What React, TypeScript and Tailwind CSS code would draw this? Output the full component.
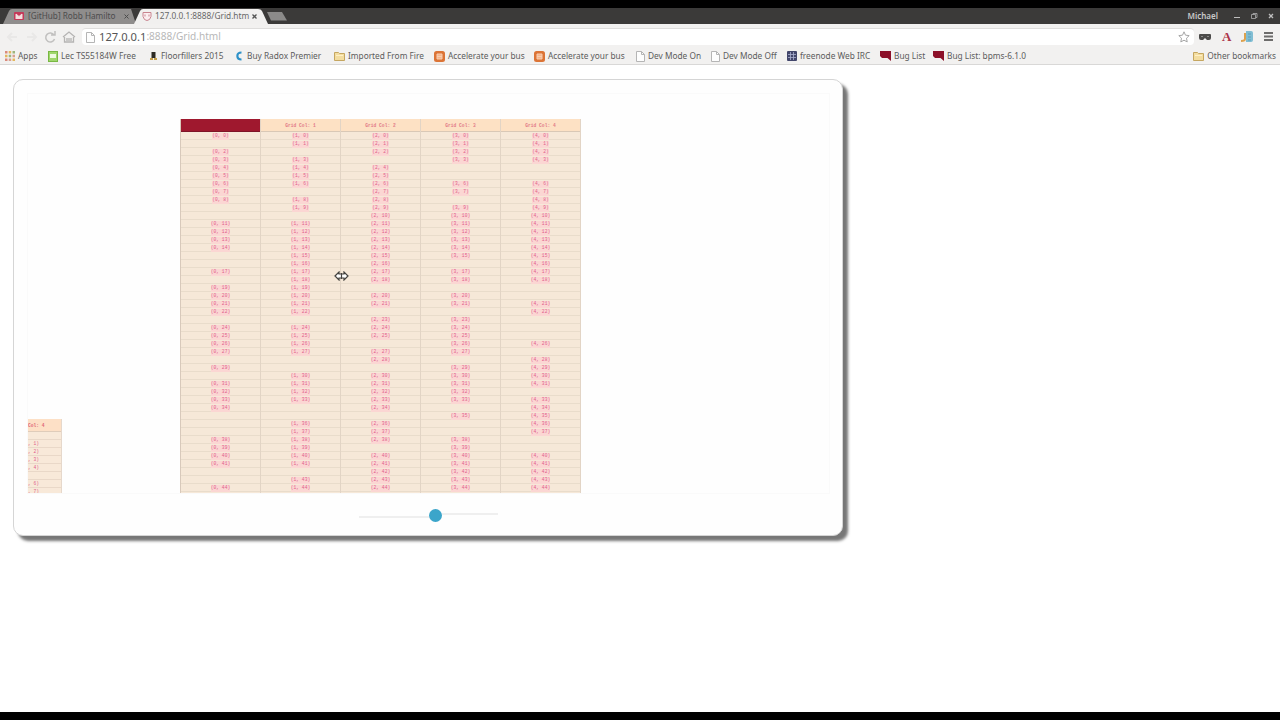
import type { ReactNode } from "react";

const ROW_COUNT = 45;

// rows holding a value, per column, as [first, last] ranges
const filledRows: [number, number][][] = [
  [[0, 0], [2, 8], [11, 14], [17, 17], [19, 22], [24, 27], [29, 29], [31, 34], [38, 41], [44, 44]],
  [[0, 1], [3, 6], [8, 9], [11, 22], [24, 27], [30, 33], [36, 41], [43, 44]],
  [[0, 2], [4, 18], [20, 21], [23, 25], [27, 28], [30, 34], [36, 38], [40, 44]],
  [[0, 3], [6, 7], [9, 15], [17, 18], [20, 21], [23, 27], [29, 33], [35, 35], [38, 44]],
  [[0, 3], [6, 18], [21, 22], [26, 26], [28, 31], [33, 37], [40, 44]],
];

const isFilled = (col: number, row: number) =>
  filledRows[col].some(([from, to]) => row >= from && row <= to);

function PageIcon() {
  return (
    <svg className="h-[11px] w-[9px] shrink-0" viewBox="0 0 9 11" fill="#fdfdfd" stroke="#b5b5b5">
      <path d="M.5.5h5l3 3v7h-8z" />
      <path d="M5.5.5v3h3" fill="none" />
    </svg>
  );
}

function FolderIcon() {
  return (
    <svg className="h-[10px] w-[11px] shrink-0" viewBox="0 0 11 10" fill="#f3dda0" stroke="#c5a660">
      <path d="M.5 1.5h4l1 1h5v7H.5z" />
      <path d="M2 4.5h7" stroke="#fff0c5" />
    </svg>
  );
}

function OrangeIcon() {
  return (
    <svg className="h-[11px] w-[11px] shrink-0" viewBox="0 0 11 11">
      <rect width="11" height="11" rx="2.5" fill="#dc7436" />
      <path d="M3 3h5v5H3zM3 5.500h5" fill="#f5b58a" stroke="#f8cdb0" />
    </svg>
  );
}

function BugIcon() {
  return (
    <svg className="h-[11px] w-[11px] shrink-0" viewBox="0 0 11 11">
      <path d="M0 0h11v10L7.500 7H2L0 5z" fill="#8c1029" />
    </svg>
  );
}

function MailIcon() {
  return (
    <svg className="h-[8px] w-[10px] shrink-0" viewBox="0 0 10 8">
      <rect width="10" height="8" rx="1" fill="#c4395a" />
      <path d="M2 7V2l3 2.500L8 2v5" fill="#f3dede" stroke="#f3dede" />
    </svg>
  );
}

function ShieldIcon() {
  return (
    <svg className="h-[10px] w-[10px] shrink-0" viewBox="0 0 10 10" fill="#fbeef0" stroke="#c9848f">
      <path d="M1 1.500h8v4L7.500 8.500 5 9.500 2.500 8.500 1 5.500z" />
      <path d="M3 3.500v2M7 3.500v2" />
    </svg>
  );
}

interface Bookmark {
  label: string;
  icon: ReactNode;
  width: string;
}

const bookmarks: Bookmark[] = [
  {
    label: "Apps",
    width: "w-[43px]",
    icon: (
      <svg className="h-[10px] w-[10px] shrink-0" viewBox="0 0 10 10">
        <path d="M0 0h2.500v2.500H0zM0 7.500h2.500V10H0z" fill="#d98a7b" />
        <path d="M3.700 0h2.500v2.500H3.700zM0 3.700h2.500v2.500H0zM7.500 7.500H10V10H7.500z" fill="#e4b75c" />
        <path d="M7.500 0H10v2.500H7.500zM3.700 3.700h2.500v2.500H3.700z" fill="#9cb57d" />
        <path d="M7.500 3.700H10v2.500H7.500zM3.700 7.500h2.500V10H3.700z" fill="#d9a08d" />
      </svg>
    ),
  },
  {
    label: "Lec TS55184W Free",
    width: "w-[101px]",
    icon: (
      <svg className="h-[11px] w-[10px] shrink-0" viewBox="0 0 10 11">
        <rect x=".5" y=".5" width="9" height="10" fill="#9fd66c" stroke="#79b843" />
        <path d="M2 3h6v4H2z" fill="#eefae2" />
      </svg>
    ),
  },
  {
    label: "Floorfillers 2015",
    width: "w-[86px]",
    icon: (
      <svg className="h-[10px] w-[9px] shrink-0" viewBox="0 0 9 10">
        <path d="M2.500 1h4v6h-4z" fill="#2c2a24" />
        <path d="M1 7h3v2H1zM5 7h3v2H5z" fill="#c5a04b" />
      </svg>
    ),
  },
  {
    label: "Buy Radox Premier",
    width: "w-[99px]",
    icon: (
      <svg className="h-[10px] w-[9px] shrink-0" viewBox="0 0 9 10" fill="none">
        <path d="M6.500 1.500C1 1.500 1 8.500 6.500 8.500" stroke="#2d91c8" strokeWidth="2.200" />
      </svg>
    ),
  },
  { label: "Imported From Fire", width: "w-[100px]", icon: <FolderIcon /> },
  { label: "Accelerate your bus", width: "w-[100px]", icon: <OrangeIcon /> },
  { label: "Accelerate your bus", width: "w-[102px]", icon: <OrangeIcon /> },
  { label: "Dev Mode On", width: "w-[75px]", icon: <PageIcon /> },
  { label: "Dev Mode Off", width: "w-[76px]", icon: <PageIcon /> },
  {
    label: "freenode Web IRC",
    width: "w-[93px]",
    icon: (
      <svg className="h-[10px] w-[10px] shrink-0" viewBox="0 0 10 10">
        <rect width="10" height="10" rx="1" fill="#42466b" />
        <path d="M3.500 1v8M6.500 1v8M1 3.500h8M1 6.500h8" stroke="#aab0cf" strokeWidth=".8" />
      </svg>
    ),
  },
  { label: "Bug List", width: "w-[53px]", icon: <BugIcon /> },
  { label: "Bug List: bpms-6.1.0", width: "w-[96px]", icon: <BugIcon /> },
];

function TabStrip() {
  return (
    <div className="relative flex h-4 items-center bg-[#3b3a39]">
      <svg className="absolute inset-0 h-4 w-[300px]" viewBox="0 0 300 16">
        <path d="M3 16 9 3Q10 1 12 1H131L136 16z" fill="#8f8d8c" />
        <path d="M134 16 140 3Q141 1 143 1H258Q261 1 262 3L268 16z" fill="#f1f0ef" />
        <path d="M267 4H282L287 12.500H271z" fill="#8b8a89" />
      </svg>
      <div className="relative flex h-4 w-[142px] items-center pl-[14px] text-[8.200px] text-[#4c4c4c]">
        <MailIcon />
        <span className="ml-1 w-[94px] whitespace-nowrap">[GitHub] Robb Hamilto</span>
        <svg className="ml-[2px] h-[5px] w-[5px]" viewBox="0 0 5 5" stroke="#4c4c4c">
          <path d="m.5.5 4 4m0-4-4 4" />
        </svg>
      </div>
      <div className="relative flex h-4 items-center text-[8.300px] text-[#686868]">
        <ShieldIcon />
        <span className="ml-[3px] w-[94px] whitespace-nowrap">127.0.0.1:8888/Grid.htm</span>
        <svg className="ml-[3px] h-[5px] w-[5px]" viewBox="0 0 5 5" stroke="#555" strokeWidth="1.300">
          <path d="m.5.5 4 4m0-4-4 4" />
        </svg>
      </div>
      <div className="ml-auto flex items-center pr-[5px] text-[#c9c9c9]">
        <span className="mr-[15px] text-[8px] font-semibold">Michael</span>
        <svg className="h-2 w-[42px]" viewBox="0 0 42 8" fill="none" stroke="#bdbdbd">
          <path d="M1 5.500h6" />
          <path d="M18.500 2.500h4v4h-4zM20 2.500v-1h4v4h-1" strokeWidth=".7" />
          <path d="M36 2l4 4M40 2l-4 4" strokeWidth="1.300" />
        </svg>
      </div>
    </div>
  );
}

function Toolbar() {
  return (
    <div className="flex h-6 items-center bg-[#f2f1f0] pt-px">
      <svg className="h-4 w-[82px]" viewBox="0 0 82 16" fill="none">
        <path d="M17 8H8m4-4L8 8l4 4M27 8h9m-4-4 4 4-4 4" stroke="#e9e8e7" strokeWidth="2" />
        <path d="M54 6a4.500 4.500 0 1 0 .5 4M55 2v4h-4" stroke="#c1c0bf" strokeWidth="1.500" />
        <path d="m63 8 6-5 6 5M64.500 8v5h9V8" stroke="#b5b4b3" strokeWidth="1.300" />
        <path d="M66 9h6v3h-6z" fill="#c9c8c7" />
      </svg>
      <div className="flex h-[17px] w-[1112px] items-center rounded-sm border-t border-[#dedddc] bg-white pl-1">
        <PageIcon />
        <span className="ml-[4px] text-[11.200px] text-[#555]">127.0.0.1</span>
        <span className="text-[10.100px] text-[#b8b8b8]">:8888/Grid.html</span>
        <svg className="mr-[4px] ml-auto h-3 w-3" viewBox="0 0 12 12" fill="#fff" stroke="#a6a6a6">
          <path d="m6 .8 1.500 3.400 3.700.4-2.700 2.600.7 3.700L6 9.200l-3.200 1.700.7-3.700L.8 4.600l3.700-.4z" />
        </svg>
      </div>
      <div className="flex flex-1 items-center pl-[5px]">
        <svg className="h-[8px] w-[12px]" viewBox="0 0 12 8">
          <path d="M0 2Q0 1 1 1h10q1 0 1 1v3q0 2-2 2H8L6 5 4 7H2Q0 7 0 5z" fill="#4c4b4a" />
          <path d="M2 3.500h2M8 3.500h2" stroke="#8c8b8a" />
        </svg>
        <span className="ml-[11px] font-['Liberation_Serif',serif] text-[13px] leading-4 font-bold text-[#ac3448]">A</span>
        <svg className="ml-[9px] h-3 w-[13px]" viewBox="0 0 13 12">
          <path d="M6 0h5q2 0 2 2v7q0 2-2 2H6z" fill="#80bdd3" />
          <path d="M5 2v6q0 2-4 2" stroke="#dda24e" strokeWidth="2" fill="none" />
          <path d="M8 3h3M8 6h3M8 9h3" stroke="#5c9fba" />
        </svg>
        <svg className="ml-[11px] h-[11px] w-[9px]" viewBox="0 0 9 11" stroke="#6d6c6b" strokeWidth="2">
          <path d="M0 2h9M0 5.500h9M0 9h9" />
        </svg>
      </div>
    </div>
  );
}

function BookmarksBar() {
  return (
    <div className="flex h-[17px] items-center border-b border-[#d9d8d7] bg-[#f2f1f0] pl-[5px] text-[8.300px] text-[#5c5c5c]">
      {bookmarks.map((b, i) => (
        <div key={i} className={`flex shrink-0 items-center gap-[3px] ${b.width}`}>
          {b.icon}
          <span className="whitespace-nowrap">{b.label}</span>
        </div>
      ))}
      <div className="ml-auto flex items-center gap-[3px] pr-[4px]">
        <FolderIcon />
        <span className="whitespace-nowrap">Other bookmarks</span>
      </div>
    </div>
  );
}

function GridColumn({ col }: { col: number }) {
  const selected = col === 0;
  return (
    <div className="w-20 shrink-0 border-r border-[#e2d4c5]">
      <div
        className={`flex h-[13px] items-center justify-center border-b whitespace-pre ${
          selected ? "border-[#7e1427] bg-[#9f182e]" : "border-[#d9c8b6] bg-[#fde1c4]"
        }`}
      >
        {!selected && <span className="mt-[3px] text-[4.600px] font-bold text-[#e27a88]">{`Grid Col: ${col}`}</span>}
      </div>
      {Array.from({ length: ROW_COUNT }, (_, row) => (
        <div key={row} className="flex h-2 items-center justify-center border-b border-[#e9dccb] leading-none whitespace-pre">
          {isFilled(col, row) && <span className="mt-[2px] bg-[#fbd6d3] py-px">{`(${col}, ${row})`}</span>}
        </div>
      ))}
    </div>
  );
}

function SmallGrid() {
  return (
    <div className="mt-[325px] h-[75px] w-[34px] shrink-0 overflow-hidden border-r border-[#e6d8cb] bg-[#f8e9d9]">
      <div className="flex h-[13px] items-center border-b border-[#dfccba] bg-[#fde0c6] text-[4.600px] font-bold whitespace-pre text-[#df6577]">
        <span className="mt-[3px]">Col: 4</span>
      </div>
      {Array.from({ length: 8 }, (_, row) => (
        <div key={row} className="flex h-2 items-center border-b border-[#e9d8c8] leading-none whitespace-pre">
          {row !== 0 && row !== 5 && <span className="mt-[2px]">{`, ${row})`}</span>}
        </div>
      ))}
    </div>
  );
}

function ZoomSlider() {
  return (
    <div className="mt-[14px] ml-[332px] flex h-[14px] w-[139px] items-center">
      <div className="mt-[4px] h-[2px] w-[70px] bg-[#efefef]" />
      <div className="h-[13px] w-[13px] rounded-full bg-[#3ba5ca]" />
      <div className="mb-[3px] h-[2px] flex-1 bg-[#efefef]" />
    </div>
  );
}

export default function App() {
  return (
    <div className="flex h-[720px] w-[1280px] flex-col overflow-hidden border-y-8 border-black bg-white font-['Noto_Sans',sans-serif]">
      <TabStrip />
      <Toolbar />
      <BookmarksBar />
      <main className="flex-1 pt-[14px] pl-[13px]">
        <div className="h-[457px] w-[830px] rounded-[10px] border border-[#d5d5d5] bg-[#fefefe] pt-[13px] pl-[13px] shadow-[5px_5px_3px_#777]">
          <div className="relative flex h-[401px] w-[803px] overflow-hidden border border-[#fafafa] bg-[#fefefe] font-['Liberation_Mono',monospace] text-[4.600px] text-[#e0608a]">
            <SmallGrid />
            <div className="mt-[25px] ml-[118px] flex w-[401px] border-l border-[#d8c9bb] bg-[#f6e8d8]">
              {filledRows.map((_, col) => (
                <GridColumn key={col} col={col} />
              ))}
            </div>
            {/* column resize cursor */}
            <svg className="absolute top-[177px] left-[306px] h-[10px] w-[15px]" viewBox="0 0 15 10">
              <path d="M1 5 5 1v2h5V1l4 4-4 4V7H5v2z" fill="#fff" stroke="#454340" strokeWidth="1.200" />
              <path d="M7.500 2v6" stroke="#454340" strokeWidth="1.200" />
            </svg>
          </div>
          <ZoomSlider />
        </div>
      </main>
    </div>
  );
}
